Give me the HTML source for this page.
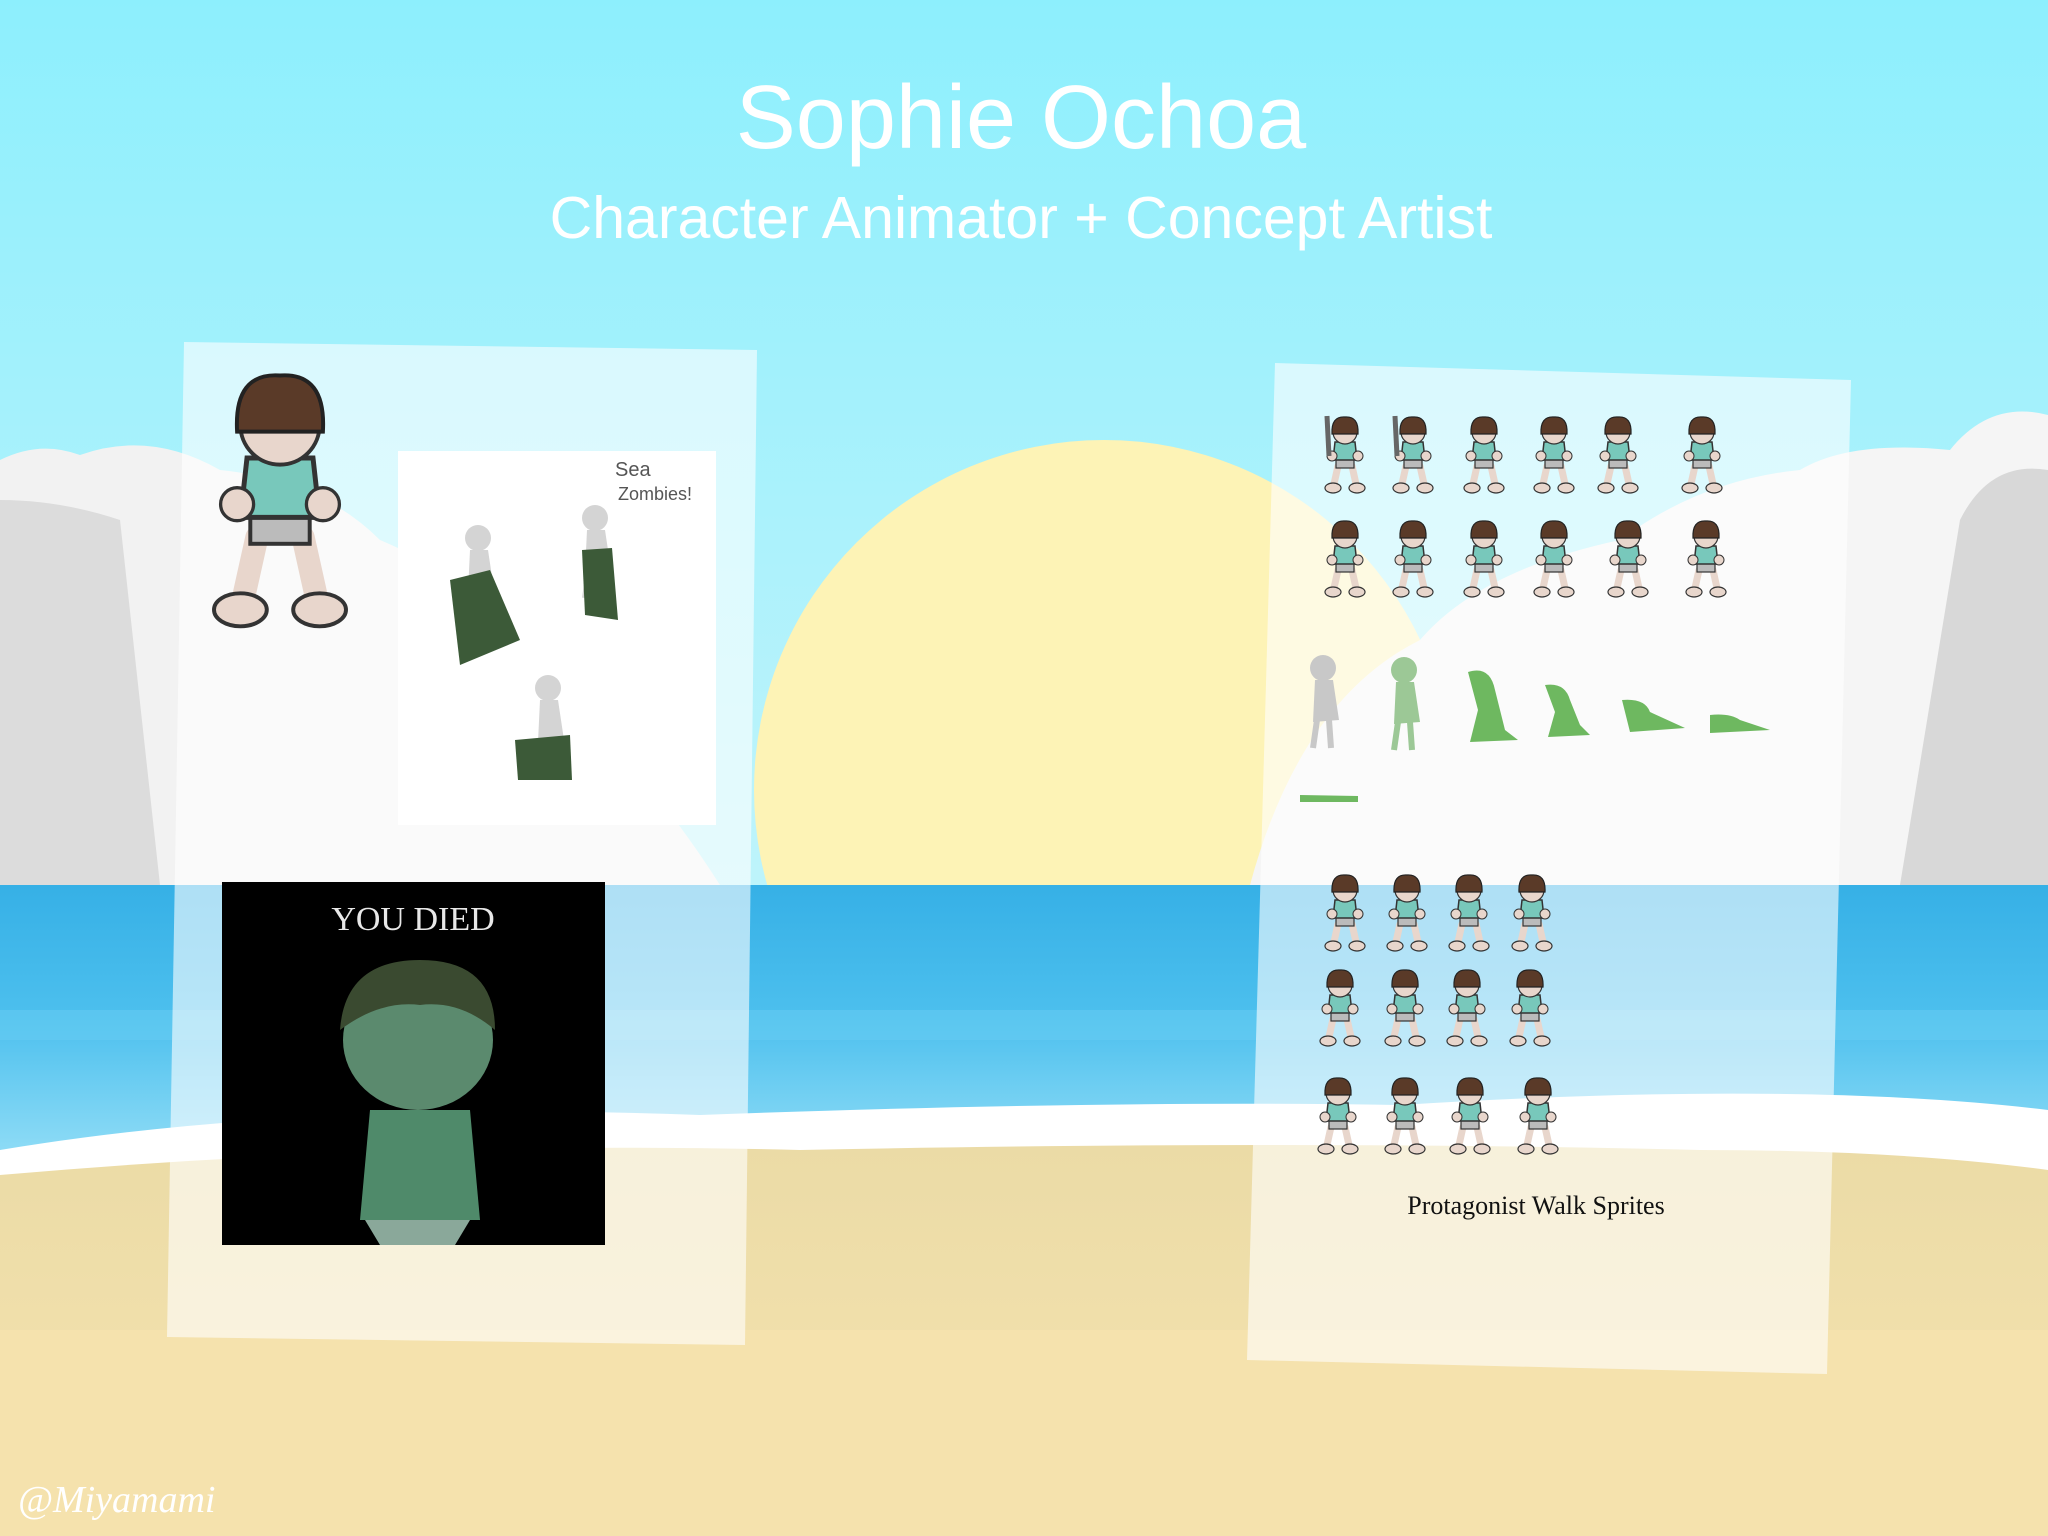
<!DOCTYPE html>
<html><head><meta charset="utf-8"><style>
html,body{margin:0;padding:0;width:2048px;height:1536px;overflow:hidden}
svg{display:block}
</style></head><body>
<svg width="2048" height="1536" viewBox="0 0 2048 1536" xmlns="http://www.w3.org/2000/svg">
<defs>
<linearGradient id="sky" x1="0" y1="0" x2="0" y2="1">
<stop offset="0" stop-color="#8deffd"/><stop offset="0.5" stop-color="#b9f3fb"/><stop offset="1" stop-color="#d6f7fb"/>
</linearGradient>
<linearGradient id="sea" x1="0" y1="0" x2="0" y2="1">
<stop offset="0" stop-color="#36b0e6"/><stop offset="0.5" stop-color="#4dc0ee"/><stop offset="1" stop-color="#8fdcf6"/>
</linearGradient>
<linearGradient id="sand" x1="0" y1="0" x2="0" y2="1">
<stop offset="0" stop-color="#ebdba6"/><stop offset="1" stop-color="#f6e4b0"/>
</linearGradient>
<g id="kid">
<path d="M-7 44 L-11 62 M7 44 L11 62" stroke="#e8d6cc" stroke-width="7" stroke-linecap="round"/>
<ellipse cx="-12" cy="66" rx="8" ry="5" fill="#e8d6cc" stroke="#333" stroke-width="1.2"/>
<ellipse cx="12" cy="66" rx="8" ry="5" fill="#e8d6cc" stroke="#333" stroke-width="1.2"/>
<rect x="-9" y="36" width="18" height="10" fill="#bbb" stroke="#333" stroke-width="1.2"/>
<path d="M-10 20 L10 20 L12 38 L-12 38 Z" fill="#78c8bb" stroke="#333" stroke-width="1.5"/>
<circle cx="-13" cy="34" r="5" fill="#e8d6cc" stroke="#333" stroke-width="1"/>
<circle cx="13" cy="34" r="5" fill="#e8d6cc" stroke="#333" stroke-width="1"/>
<circle cx="0" cy="10" r="12" fill="#e8d6cc" stroke="#333" stroke-width="1.2"/>
<path d="M-13 12 Q-14 -6 0 -5 Q14 -6 13 12 Z" fill="#5a3a28" stroke="#222" stroke-width="1.2"/>
</g>
<g id="kidS">
<use href="#kid"/>
<path d="M-16 34 L-18 -6" stroke="#666" stroke-width="5"/>
</g>
<g id="zom">
<ellipse cx="0" cy="8" rx="13" ry="13" fill="currentColor"/>
<path d="M-8 20 L10 20 L16 60 L-10 62 Z" fill="currentColor"/>
<path d="M-6 60 L-10 88 M6 60 L8 88" stroke="currentColor" stroke-width="6"/>
</g>
</defs>
<rect width="2048" height="1536" fill="url(#sky)"/>
<circle cx="1104" cy="790" r="350" fill="#fdf3b6"/>
<path d="M0 460 Q40 440 80 455 Q150 430 220 470 Q320 480 380 540 Q520 600 560 700 Q640 760 720 885 L0 885Z" fill="#f2f2f2"/>
<path d="M0 500 Q60 500 120 520 L160 885 L0 885Z" fill="#dcdcdc"/>
<path d="M2048 415 Q1990 400 1950 450 Q1850 440 1800 470 Q1700 480 1620 540 Q1480 570 1420 640 Q1300 700 1250 885 L2048 885Z" fill="#f5f5f5"/>
<path d="M2048 470 Q1990 460 1960 520 L1900 885 L2048 885Z" fill="#d8d8d8"/>
<rect x="0" y="885" width="2048" height="270" fill="url(#sea)"/>
<rect x="0" y="1010" width="2048" height="30" fill="#66ccf2" opacity=".6"/>
<path d="M0 1150 Q300 1100 700 1115 Q1100 1100 1400 1105 Q1800 1080 2048 1110 L2048 1170 L0 1175Z" fill="#ffffff"/>
<path d="M0 1175 Q400 1140 800 1150 Q1300 1140 1700 1150 Q1900 1150 2048 1170 L2048 1536 L0 1536Z" fill="url(#sand)"/>
<rect x="0" y="1330" width="2048" height="206" fill="#f5e2ad"/>
<path d="M184 342 L757 350 L745 1345 L167 1337 Z" fill="#ffffff" opacity=".6"/>
<path d="M1275 363 L1851 380 L1827 1374 L1247 1360 Z" fill="#ffffff" opacity=".6"/>
<rect x="398" y="451" width="318" height="374" fill="#ffffff"/>
<text x="615" y="476" font-family="Liberation Sans, sans-serif" font-size="20" fill="#555">Sea</text>
<text x="618" y="500" font-family="Liberation Sans, sans-serif" font-size="18" fill="#555">Zombies!</text>
<g color="#d4d4d4"><use href="#zom" x="478" y="530"/><use href="#zom" x="595" y="510"/><use href="#zom" x="548" y="680"/></g>
<path d="M450 580 L490 570 L520 640 L460 665Z" fill="#3c5a38"/>
<path d="M582 550 L612 548 L618 620 L585 615Z" fill="#3c5a38"/>
<path d="M515 740 L570 735 L572 780 L518 780Z" fill="#3c5a38"/>
<g transform="translate(280,392) scale(3.3)"><use href="#kid"/></g>
<rect x="222" y="882" width="383" height="363" fill="#000"/>
<text x="413" y="930" text-anchor="middle" font-family="Liberation Serif, serif" font-size="34" fill="#e8e8e8">YOU DIED</text>
<ellipse cx="418" cy="1040" rx="75" ry="70" fill="#5b8a6e"/>
<path d="M340 1030 Q345 960 420 960 Q495 960 495 1030 Q460 1000 420 1005 Q380 1000 340 1030Z" fill="#3a4a30"/>
<path d="M370 1110 L470 1110 L480 1220 L360 1220Z" fill="#4f8a6a"/>
<path d="M365 1220 L470 1220 L455 1245 L380 1245Z" fill="#8aa89a"/>
<g>
<use href="#kidS" x="1345" y="422"/><use href="#kidS" x="1413" y="422"/><use href="#kid" x="1484" y="422"/><use href="#kid" x="1554" y="422"/><use href="#kid" x="1618" y="422"/><use href="#kid" x="1702" y="422"/>
<use href="#kid" x="1345" y="526"/><use href="#kid" x="1413" y="526"/><use href="#kid" x="1484" y="526"/><use href="#kid" x="1554" y="526"/><use href="#kid" x="1628" y="526"/><use href="#kid" x="1706" y="526"/>
</g>
<g color="#c8c8c8"><use href="#zom" x="1323" y="660"/></g>
<g color="#9cc896"><use href="#zom" x="1404" y="662"/></g>
<g fill="#6eb860">
<path d="M1468 672 Q1490 665 1495 690 L1505 730 L1518 740 L1470 742 L1478 710Z"/>
<path d="M1545 685 Q1565 682 1570 700 L1580 725 L1590 735 L1548 737 L1555 712Z"/>
<path d="M1622 700 Q1645 698 1650 712 L1685 728 L1630 732Z"/>
<path d="M1710 715 Q1730 713 1740 720 L1770 730 L1710 733Z"/>
<path d="M1300 795 L1358 796 L1358 802 L1300 802Z"/>
</g>
<g>
<use href="#kid" x="1345" y="880"/><use href="#kid" x="1407" y="880"/><use href="#kid" x="1469" y="880"/><use href="#kid" x="1532" y="880"/>
<use href="#kid" x="1340" y="975"/><use href="#kid" x="1405" y="975"/><use href="#kid" x="1467" y="975"/><use href="#kid" x="1530" y="975"/>
<use href="#kid" x="1338" y="1083"/><use href="#kid" x="1405" y="1083"/><use href="#kid" x="1470" y="1083"/><use href="#kid" x="1538" y="1083"/>
</g>
<text x="1536" y="1214" text-anchor="middle" font-family="Liberation Serif, serif" font-size="26" fill="#111">Protagonist Walk Sprites</text>
<text x="1021" y="148" text-anchor="middle" font-family="Liberation Sans, sans-serif" font-size="90" fill="#ffffff">Sophie Ochoa</text>
<text x="1021" y="238" text-anchor="middle" font-family="Liberation Sans, sans-serif" font-size="59" fill="#ffffff">Character Animator + Concept Artist</text>
<text x="18" y="1512" font-family="Liberation Serif, serif" font-style="italic" font-size="38" fill="#ffffff">@Miyamami</text>
</svg>
</body></html>
